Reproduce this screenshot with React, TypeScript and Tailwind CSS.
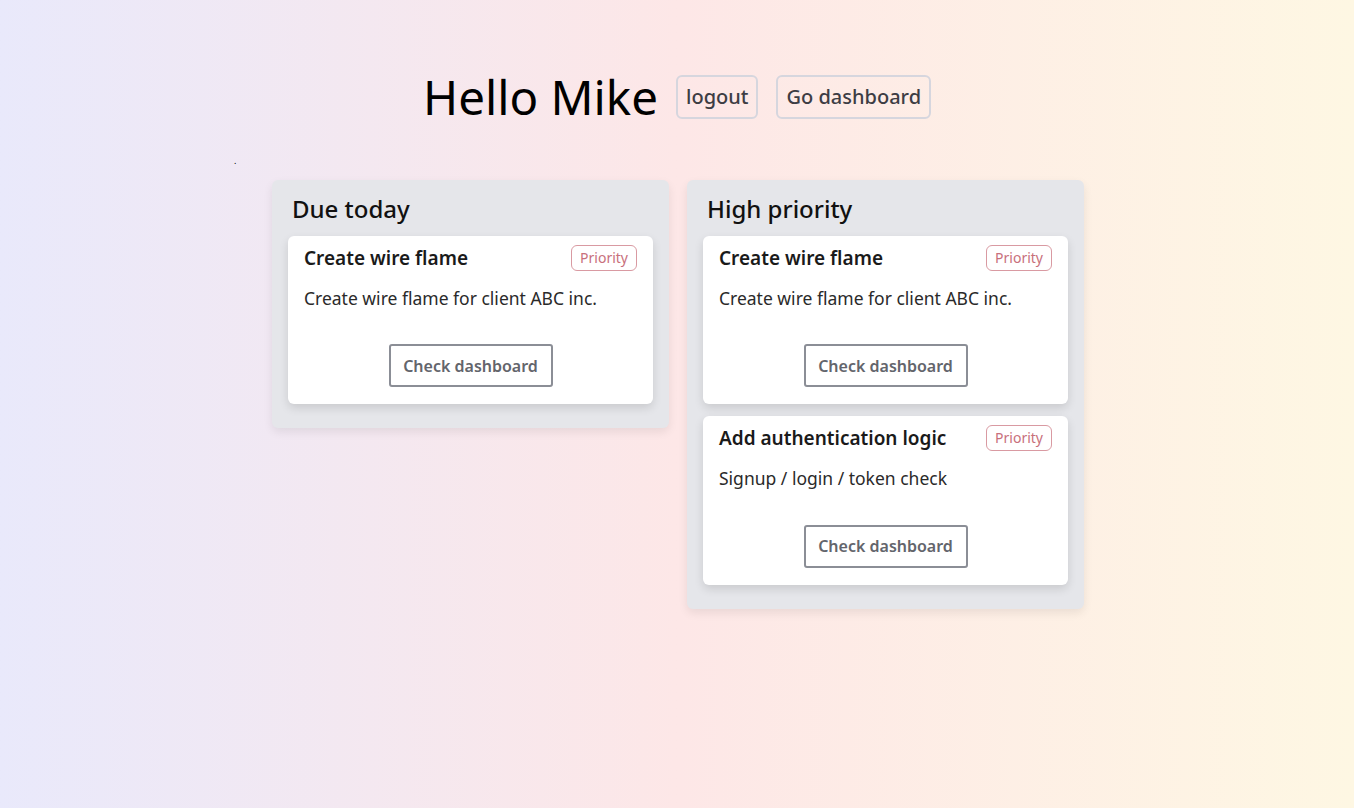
import React from "react";

interface Task {
  title: string;
  description: string;
}

const dueToday: Task[] = [
  { title: "Create wire flame", description: "Create wire flame for client ABC inc." },
];

const highPriority: Task[] = [
  { title: "Create wire flame", description: "Create wire flame for client ABC inc." },
  { title: "Add authentication logic", description: "Signup / login / token check" },
];

function TaskCard({ task }: { task: Task }) {
  return (
    <div className="bg-white rounded-md shadow-[0_4px_10px_rgba(0,0,0,0.12)] px-4 pt-[9px] pb-[17px]">
      <div className="flex items-center justify-between h-[26px]">
        <h3 className="text-[19px] font-semibold text-[#1a1a1a]">{task.title}</h3>
        <span className="text-[14px] leading-none text-[#c8707c] border border-[#d99aa2] rounded-md px-2 py-[5px]">
          Priority
        </span>
      </div>
      <p className="mt-[14px] text-[17.5px] text-[#2a2a2a]">{task.description}</p>
      <div className="flex justify-center mt-[33px]">
        <button className="w-[164px] h-[43px] border-2 border-[#8b8e96] rounded-[3px] text-[16px] font-semibold text-[#63656c] bg-white">
          Check dashboard
        </button>
      </div>
    </div>
  );
}

function Column({ title, tasks }: { title: string; tasks: Task[] }) {
  return (
    <div className="w-[397px] bg-[#e5e6ea] rounded-md shadow-[0_4px_10px_rgba(0,0,0,0.08)] px-4 pt-[13px] pb-6">
      <h2 className="px-1 text-[24px] font-medium text-[#111] leading-[32px]">{title}</h2>
      <div className="mt-[11px] flex flex-col gap-3">
        {tasks.map((t, i) => (
          <TaskCard key={i} task={t} />
        ))}
      </div>
    </div>
  );
}

export default function App() {
  return (
    <div
      className="min-h-[808px] w-full bg-gradient-to-r from-[#e9e9fb] via-[#fde7e7] to-[#fef7e3]"
      style={{ fontFamily: '"Noto Sans", "Open Sans", sans-serif' }}
    >
      <header className="pt-[69px] flex items-center justify-center gap-[18px]">
        <h1 className="text-[47.5px] leading-[56px] text-black font-normal">Hello Mike</h1>
        <button className="h-[44px] px-2 border-2 border-[#d6d6de] rounded-md text-[20px] font-medium text-[#3d3d44] bg-transparent">
          logout
        </button>
        <button className="h-[44px] px-2 border-2 border-[#d6d6de] rounded-md text-[20px] font-medium text-[#3d3d44] bg-transparent">
          Go dashboard
        </button>
      </header>
      <div className="pl-[234px] mt-[31px] h-[24px] text-[9px] leading-none text-black">.</div>
      <main className="flex justify-center items-start gap-[18px] pl-[2px]">
        <Column title="Due today" tasks={dueToday} />
        <Column title="High priority" tasks={highPriority} />
      </main>
    </div>
  );
}
